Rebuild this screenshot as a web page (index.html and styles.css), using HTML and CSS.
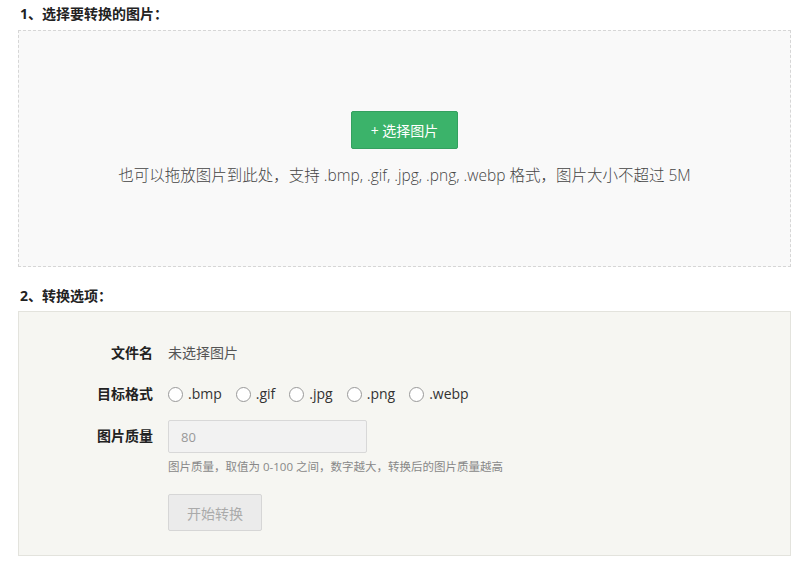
FILE: index.html
```html
<!DOCTYPE html>
<html lang="zh-CN">
<head>
    <meta charset="UTF-8">
    <meta name="viewport" content="width=device-width, initial-scale=1.0">
    <title>图片格式转换</title>
    <link rel="stylesheet" href="styles.css">
</head>
<body>
    <div class="page">
        <h3 class="titulo">1、选择要转换的图片：</h3>
        <div class="upload">
            <button class="btn-escolher">+ 选择图片</button>
            <p class="dica">也可以拖放图片到此处，支持 .bmp, .gif, .jpg, .png, .webp 格式，图片大小不超过 5M</p>
        </div>

        <h3 class="titulo titulo-2">2、转换选项：</h3>
        <div class="opcoes">
            <div class="linha">
                <span class="rotulo">文件名</span>
                <span class="arquivo">未选择图片</span>
            </div>
            <div class="linha linha-formato">
                <span class="rotulo">目标格式</span>
                <div class="formatos">
                    <label><input type="radio" name="fmt"> .bmp</label>
                    <label><input type="radio" name="fmt"> .gif</label>
                    <label><input type="radio" name="fmt"> .jpg</label>
                    <label><input type="radio" name="fmt"> .png</label>
                    <label><input type="radio" name="fmt"> .webp</label>
                </div>
            </div>
            <div class="linha linha-qualidade">
                <span class="rotulo">图片质量</span>
                <div>
                    <input type="text" class="qualidade" value="80" disabled>
                    <p class="ajuda">图片质量，取值为 0-100 之间，数字越大，转换后的图片质量越高</p>
                    <button class="btn-converter" disabled>开始转换</button>
                </div>
            </div>
        </div>
    </div>
</body>
</html>
```
FILE: styles.css
```css
body {
    margin: 0;
    background-color: #fff;
    font-family: "Open Sans", "Noto Sans CJK SC", sans-serif;
    color: #333;
}

.page {
    width: 773px;
    margin-left: 18px;
}

.titulo {
    font-size: 14px;
    font-weight: bold;
    line-height: 20px;
    margin: 0;
    padding: 4px 0 6px 2px;
    color: #222;
}

.titulo-2 {
    padding-top: 19px;
    padding-bottom: 5px;
}

/* Caixa de upload */
.upload {
    box-sizing: border-box;
    height: 237px;
    border: 1px dashed #d6d6d6;
    background-color: #f9f9f9;
    text-align: center;
    padding-top: 80px;
}

.btn-escolher {
    width: 107px;
    height: 38px;
    background-color: #3bb36a;
    color: #fff;
    border: 1px solid #34a05f;
    border-radius: 2px;
    font-family: inherit;
    font-size: 14px;
    cursor: pointer;
}

.dica {
    margin: 15px 0 0 0;
    font-size: 15.5px;
    line-height: 22px;
    color: #444;
    font-weight: 300;
}

/* Caixa de opções */
.opcoes {
    box-sizing: border-box;
    height: 245px;
    border: 1px solid #e3e3dd;
    background-color: #f6f6f2;
    padding-top: 31px;
}

.linha {
    display: flex;
    align-items: flex-start;
    margin-bottom: 21px;
    font-size: 14px;
    line-height: 20px;
}

.linha-formato {
    margin-bottom: 16px;
}

.rotulo {
    width: 134px;
    text-align: right;
    font-weight: bold;
    color: #222;
    margin-right: 15px;
    flex-shrink: 0;
}

.arquivo {
    color: #555;
}

.formatos {
    display: flex;
    gap: 14px;
}

.formatos label {
    display: flex;
    align-items: center;
    gap: 5px;
    color: #333;
}

.formatos input {
    appearance: none;
    margin: 0;
    width: 15px;
    height: 15px;
    border: 1px solid #999;
    border-radius: 50%;
    background-color: #fff;
}

.linha-qualidade .rotulo {
    padding-top: 6px;
}

.qualidade {
    box-sizing: border-box;
    width: 199px;
    height: 33px;
    border: 1px solid #d8d8d8;
    border-radius: 2px;
    background-color: #f2f2f2;
    padding: 0 12px;
    font-family: inherit;
    font-size: 13px;
    color: #999;
    display: block;
}

.ajuda {
    margin: 5px 0 0 0;
    font-size: 11.5px;
    line-height: 18px;
    color: #888;
}

.btn-converter {
    margin-top: 18px;
    width: 94px;
    height: 37px;
    border: 1px solid #d6d6d6;
    border-radius: 2px;
    background-color: #ebebeb;
    color: #aaa;
    font-family: inherit;
    font-size: 14px;
}
```
